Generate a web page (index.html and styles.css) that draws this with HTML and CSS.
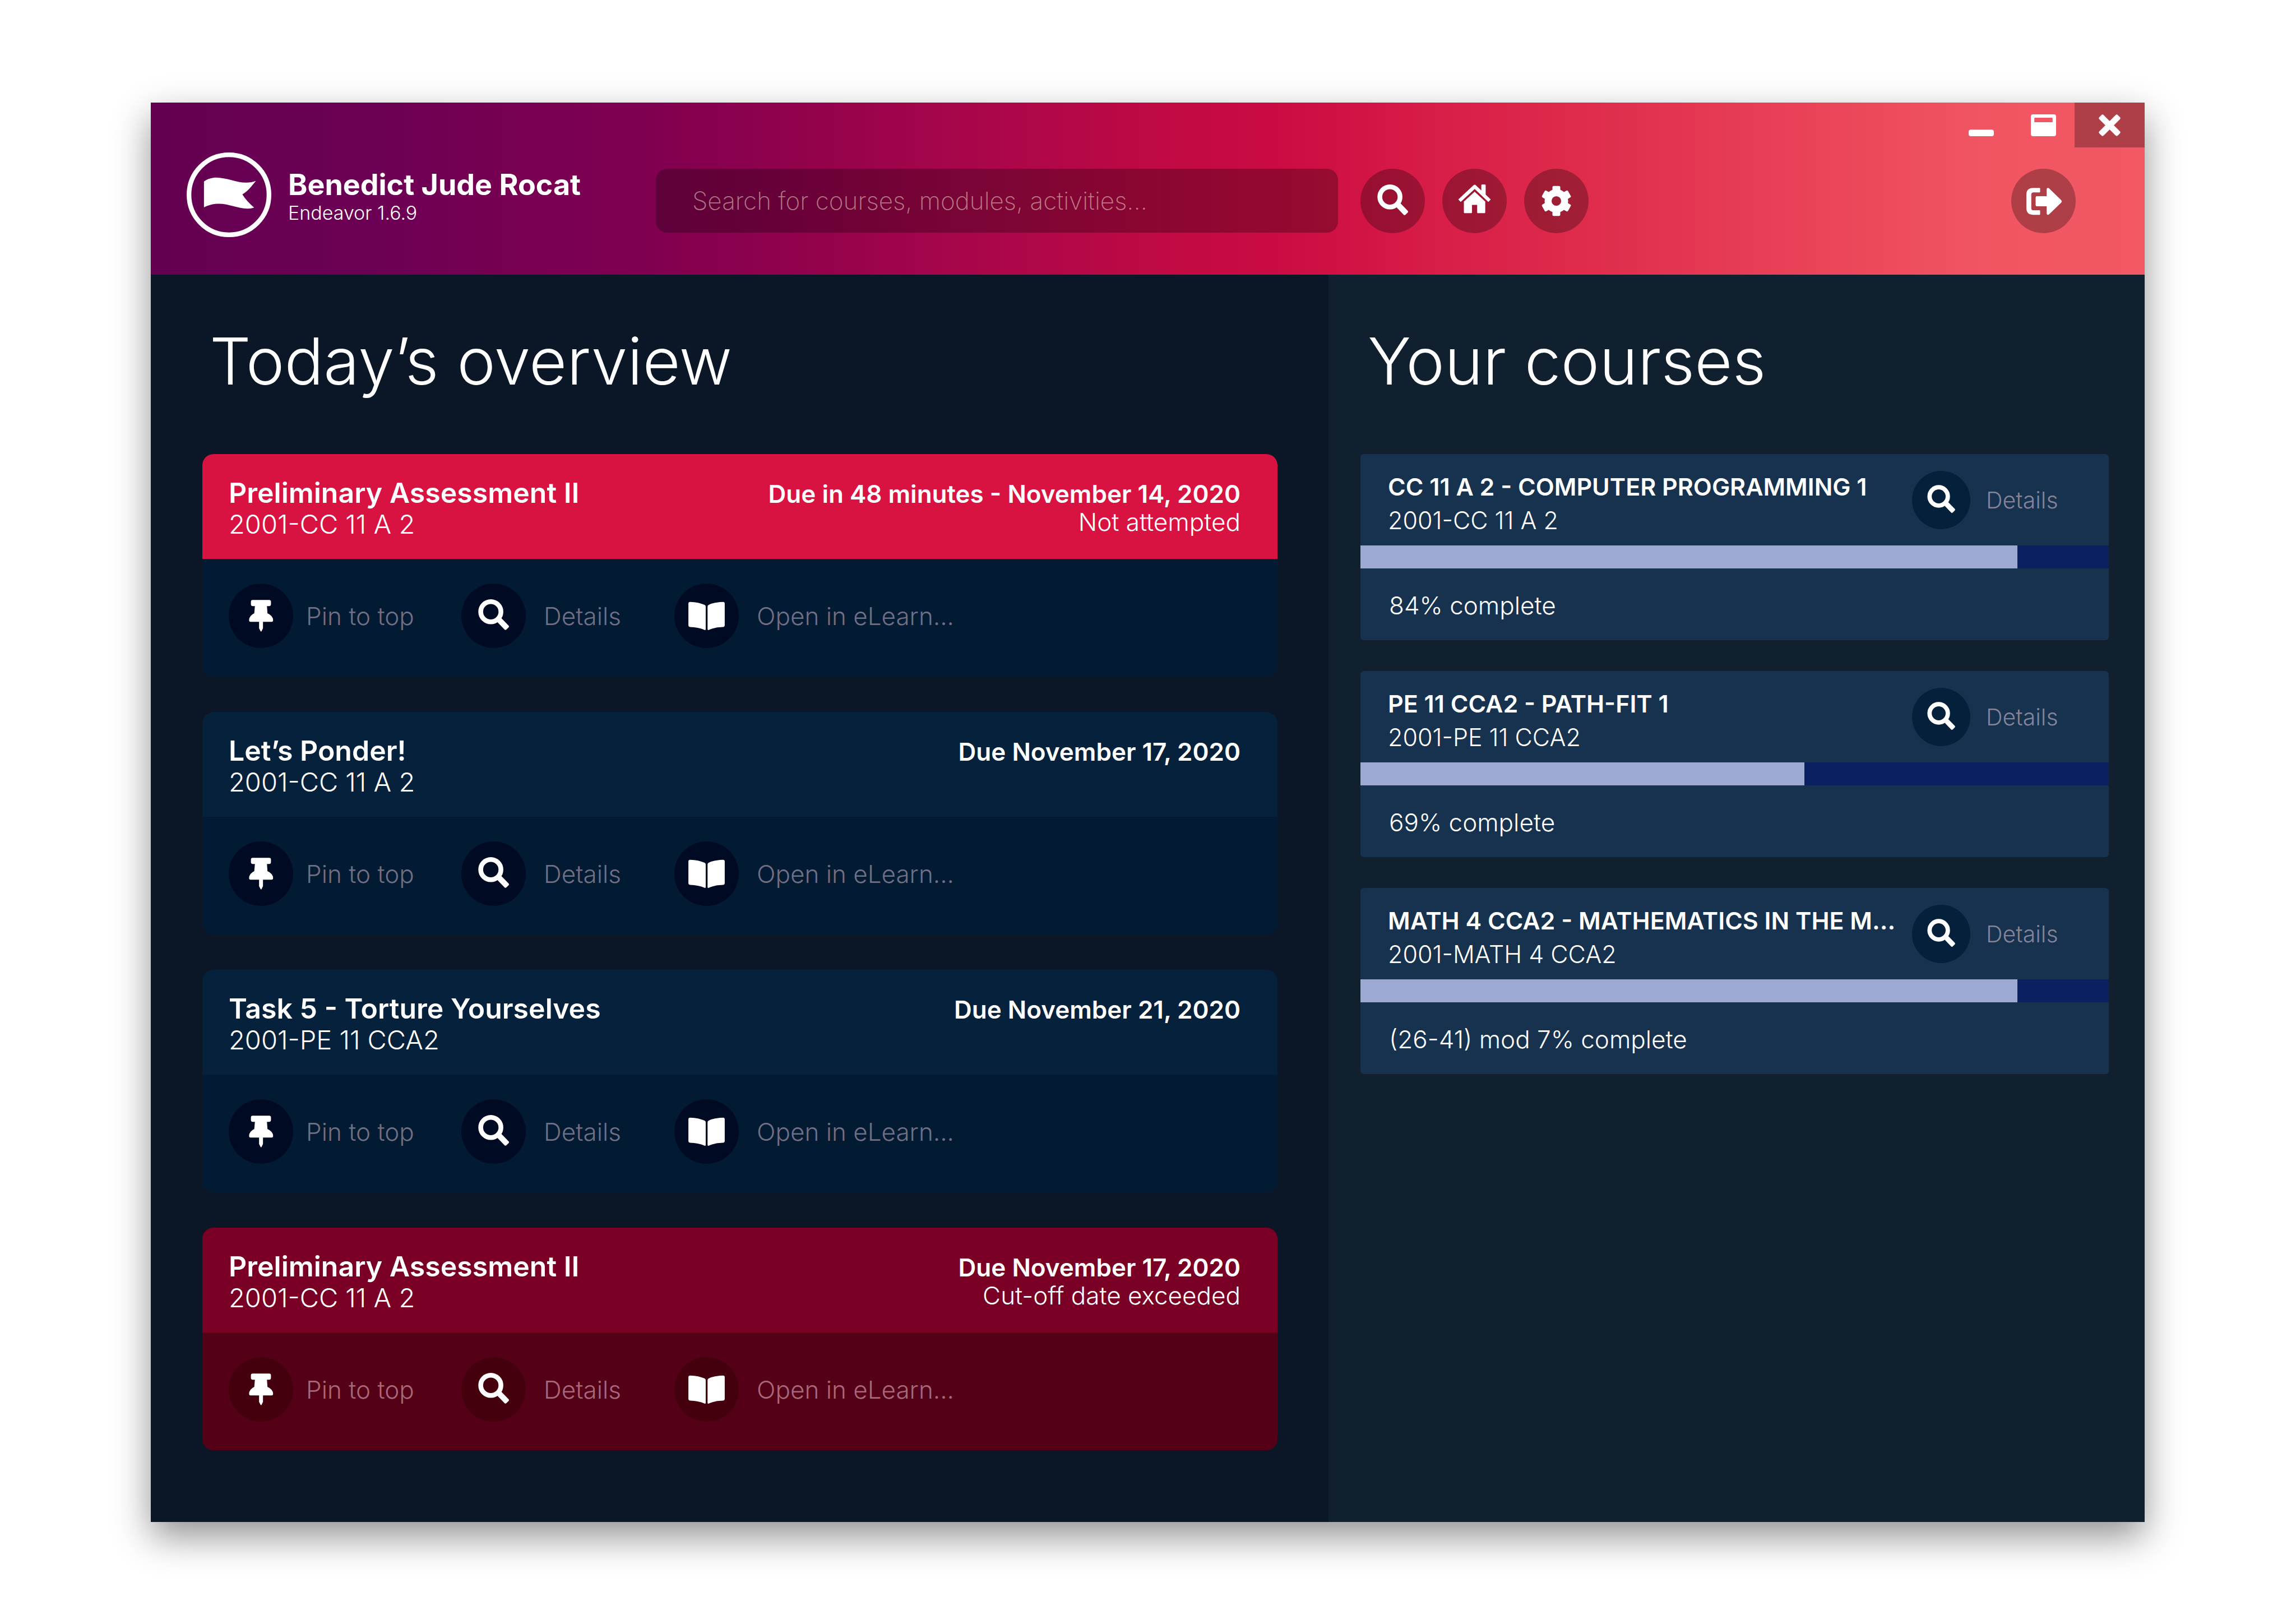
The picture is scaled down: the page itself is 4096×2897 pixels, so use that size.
FILE: index.html
```
<!DOCTYPE html>
<html lang="en">
<head>
<meta charset="utf-8">
<meta name="viewport" content="width=device-width, initial-scale=1">
<title>Endeavor</title>
<link rel="stylesheet" href="styles.css">
</head>
<body>
<svg class="sprite" aria-hidden="true">
  <symbol id="search" viewBox="0 0 148 148">
    <circle cx="67.7" cy="64.7" r="23.2" fill="none" stroke="currentColor" stroke-width="11"/>
    <rect x="0" y="-6.5" width="28" height="13" rx="3" fill="currentColor" transform="translate(86.5 83) rotate(46)"/>
  </symbol>
  <symbol id="home" viewBox="0 0 148 148">
    <path d="M39.5 73.3 74.3 41 108.5 73.3" fill="none" stroke="currentColor" stroke-width="8" stroke-linejoin="round"/>
    <path d="M89.6 54V38q0-2 2-2h6q2 0 2 2v24z" fill="currentColor"/>
    <path d="M74.3 52.7 98.6 75.3V100q0 2-2 2H82q-2 0-2-2V83H68.2v17q0 2-2 2H51.6q-2 0-2-2V75.3z" fill="currentColor"/>
  </symbol>
  <symbol id="gear" viewBox="0 0 148 148">
    <circle cx="74" cy="74" r="19" fill="none" stroke="currentColor" stroke-width="16"/>
    <g fill="currentColor">
      <rect x="65" y="39.5" width="18" height="16" rx="3"/>
      <rect x="65" y="39.5" width="18" height="16" rx="3" transform="rotate(60 74 74)"/>
      <rect x="65" y="39.5" width="18" height="16" rx="3" transform="rotate(120 74 74)"/>
      <rect x="65" y="39.5" width="18" height="16" rx="3" transform="rotate(180 74 74)"/>
      <rect x="65" y="39.5" width="18" height="16" rx="3" transform="rotate(240 74 74)"/>
      <rect x="65" y="39.5" width="18" height="16" rx="3" transform="rotate(300 74 74)"/>
    </g>
  </symbol>
  <symbol id="logout" viewBox="0 0 148 148">
    <path d="M66.3 45.5V52.8q0 1.500-1.500 1.500H51q-5 0-5 5v31q0 5 5 5h13.800q1.500 0 1.500 1.500v7.300q0 1.600-1.500 1.600H50q-15.200 0-15.200-15.200V59.200Q34.800 44 50 44h14.800q1.500 0 1.500 1.500z" fill="currentColor"/>
    <path d="M56 66q0-3 3-3H81.300V47q0-3 3-3 1.700 0 3 1.400L115 72.500q2.200 2.500 0 5L87.300 104.300q-1.300 1.400-3 1.400-3 0-3-3V86.300H59q-3 0-3-3z" fill="currentColor"/>
  </symbol>
  <symbol id="pin" viewBox="0 0 148 148">
    <g fill="currentColor">
      <rect x="51" y="37.700" width="46" height="14" rx="4"/>
      <path d="M60.300 50H87.700L89 68.300Q102 74 102 84.500 102 87.700 99 87.700H49.700Q46.700 87.700 46.700 84.500 46.700 74 58.700 68.300z"/>
      <path d="M69.700 86H78.700V102.700L75.600 109Q74.300 111.300 73 109L69.700 102.700z"/>
    </g>
  </symbol>
  <symbol id="book" viewBox="0 0 148 148">
    <path d="M32.300 46q0-4 4-4Q56 42.500 69.500 49 72 50.300 72 52.500V105q0 2.500-2.500 1.600Q55 100 36.300 99.700q-4 0-4-4z" fill="currentColor"/>
    <path d="M115.700 46q0-4-4-4Q92 42.500 78.800 49 76.300 50.300 76.300 52.500V105q0 2.500 2.500 1.600Q93 100 111.700 99.700q4 0 4-4z" fill="currentColor"/>
  </symbol>
</svg>

<div class="window">
  <header class="topbar">
    <div class="titlebar">
      <button class="win-btn" type="button" aria-label="Minimize">
        <svg class="win-icon" viewBox="0 0 58 50"><rect y="35" width="58" height="15" rx="5" fill="currentColor"/></svg>
      </button>
      <button class="win-btn" type="button" aria-label="Maximize">
        <svg class="win-icon" viewBox="0 0 58 50"><path fill="currentColor" fill-rule="evenodd" d="M5 0H53q5 0 5 5V45q0 5-5 5H5q-5 0-5-5V5Q0 0 5 0zM9.500 7.500Q8 7.500 8 9V18H50V9q0-1.500-1.500-1.500z"/></svg>
      </button>
      <button class="win-btn win-close" type="button" aria-label="Close">
        <svg class="win-icon" viewBox="0 0 58 50"><g fill="currentColor"><rect x="-1" y="18" width="60" height="14" rx="4" transform="rotate(45 29 25)"/><rect x="-1" y="18" width="60" height="14" rx="4" transform="rotate(-45 29 25)"/></g></svg>
      </button>
    </div>
    <div class="toolbar">
      <div class="brand">
        <svg class="logo" viewBox="0 0 582 582" aria-hidden="true">
          <circle cx="291" cy="291" r="275" fill="none" stroke="#fff" stroke-width="32"/>
          <path fill="#fff" d="M119 199C146 180 174 172 204 172 270 172 345 207 409 207 434 207 456 204 476 196 447 231 420 268 383 288 404 323 433 352 464 379 450 384 436 386 419 386 350 386 290 353 224 353 186 353 152 360 119 378z"/>
        </svg>
        <div class="brand-text">
          <strong class="user">Benedict Jude Rocat</strong>
          <span class="version">Endeavor 1.6.9</span>
        </div>
      </div>
      <form class="search" role="search">
        <input class="search-box" type="search" aria-label="Search" placeholder="Search for courses, modules, activities...">
        <button class="round" type="button" aria-label="Search"><svg class="icon"><use href="#search"/></svg></button>
        <button class="round" type="button" aria-label="Home"><svg class="icon"><use href="#home"/></svg></button>
        <button class="round" type="button" aria-label="Settings"><svg class="icon"><use href="#gear"/></svg></button>
      </form>
      <button class="round logout" type="button" aria-label="Log out"><svg class="icon"><use href="#logout"/></svg></button>
    </div>
  </header>

  <div class="columns">
    <main class="overview">
      <h1 class="heading">Today’s overview</h1>
      <div class="tasks">
        <article class="task task-urgent">
          <div class="task-head">
            <div><h2 class="task-title">Preliminary Assessment II</h2><p class="task-course">2001-CC 11 A 2</p></div>
            <div class="task-due"><p class="due">Due in 48 minutes - November 14, 2020</p><p class="status">Not attempted</p></div>
          </div>
          <div class="task-actions">
            <button class="action action-pin" type="button"><span class="disc"><svg class="icon"><use href="#pin"/></svg></span>Pin to top</button>
            <button class="action" type="button"><span class="disc"><svg class="icon"><use href="#search"/></svg></span>Details</button>
            <button class="action" type="button"><span class="disc"><svg class="icon"><use href="#book"/></svg></span>Open in eLearn...</button>
          </div>
        </article>
        <article class="task">
          <div class="task-head">
            <div><h2 class="task-title">Let’s Ponder!</h2><p class="task-course">2001-CC 11 A 2</p></div>
            <div class="task-due"><p class="due">Due November 17, 2020</p></div>
          </div>
          <div class="task-actions">
            <button class="action action-pin" type="button"><span class="disc"><svg class="icon"><use href="#pin"/></svg></span>Pin to top</button>
            <button class="action" type="button"><span class="disc"><svg class="icon"><use href="#search"/></svg></span>Details</button>
            <button class="action" type="button"><span class="disc"><svg class="icon"><use href="#book"/></svg></span>Open in eLearn...</button>
          </div>
        </article>
        <article class="task">
          <div class="task-head">
            <div><h2 class="task-title">Task 5 - Torture Yourselves</h2><p class="task-course">2001-PE 11 CCA2</p></div>
            <div class="task-due"><p class="due">Due November 21, 2020</p></div>
          </div>
          <div class="task-actions">
            <button class="action action-pin" type="button"><span class="disc"><svg class="icon"><use href="#pin"/></svg></span>Pin to top</button>
            <button class="action" type="button"><span class="disc"><svg class="icon"><use href="#search"/></svg></span>Details</button>
            <button class="action" type="button"><span class="disc"><svg class="icon"><use href="#book"/></svg></span>Open in eLearn...</button>
          </div>
        </article>
        <article class="task task-overdue">
          <div class="task-head">
            <div><h2 class="task-title">Preliminary Assessment II</h2><p class="task-course">2001-CC 11 A 2</p></div>
            <div class="task-due"><p class="due">Due November 17, 2020</p><p class="status">Cut-off date exceeded</p></div>
          </div>
          <div class="task-actions">
            <button class="action action-pin" type="button"><span class="disc"><svg class="icon"><use href="#pin"/></svg></span>Pin to top</button>
            <button class="action" type="button"><span class="disc"><svg class="icon"><use href="#search"/></svg></span>Details</button>
            <button class="action" type="button"><span class="disc"><svg class="icon"><use href="#book"/></svg></span>Open in eLearn...</button>
          </div>
        </article>
      </div>
    </main>

    <aside class="courses">
      <h1 class="heading">Your courses</h1>
      <div class="course-list">
        <article class="course">
          <div class="course-head">
            <div><h2 class="course-title">CC 11 A 2 - COMPUTER PROGRAMMING 1</h2><p class="course-code">2001-CC 11 A 2</p></div>
            <button class="action action-small" type="button"><span class="disc"><svg class="icon"><use href="#search"/></svg></span>Details</button>
          </div>
          <div class="bar" role="progressbar" aria-label="Course progress"><div class="bar-fill" style="width:87.8%"></div></div>
          <p class="course-foot">84% complete</p>
        </article>
        <article class="course">
          <div class="course-head">
            <div><h2 class="course-title">PE 11 CCA2 - PATH-FIT 1</h2><p class="course-code">2001-PE 11 CCA2</p></div>
            <button class="action action-small" type="button"><span class="disc"><svg class="icon"><use href="#search"/></svg></span>Details</button>
          </div>
          <div class="bar" role="progressbar" aria-label="Course progress"><div class="bar-fill" style="width:59.3%"></div></div>
          <p class="course-foot">69% complete</p>
        </article>
        <article class="course">
          <div class="course-head">
            <div><h2 class="course-title">MATH 4 CCA2 - MATHEMATICS IN THE M...</h2><p class="course-code">2001-MATH 4 CCA2</p></div>
            <button class="action action-small" type="button"><span class="disc"><svg class="icon"><use href="#search"/></svg></span>Details</button>
          </div>
          <div class="bar" role="progressbar" aria-label="Course progress"><div class="bar-fill" style="width:87.8%"></div></div>
          <p class="course-foot">(26-41) mod 7% complete</p>
        </article>
      </div>
    </aside>
  </div>
</div>
</body>
</html>
```
FILE: styles.css
```
* { box-sizing: border-box; }

body {
  margin: 0;
  min-height: 100vh;
  padding: 183px 270px 182px 269px;
  display: flex;
  background: #fff;
  color: #fff;
  font-family: Inter, "Liberation Sans", sans-serif;
  font-weight: 300;
  font-size: 44px;
  line-height: 60px;
}

h1, h2, p { margin: 0; font-weight: inherit; }
p, h2 { white-space: nowrap; }

button {
  margin: 0;
  padding: 0;
  border: 0;
  background: none;
  color: inherit;
  font: inherit;
  cursor: pointer;
}

.sprite { position: absolute; width: 0; height: 0; }

.window {
  flex: 1;
  min-width: 0;
  display: flex;
  flex-direction: column;
  box-shadow: 0 26px 62px rgba(0, 0, 0, .43);
}

/* Header */
.topbar {
  padding-bottom: 67px;
  background: linear-gradient(90deg,
    #640051 0%, #6c0054 11%, #780052 19%, #800050 25%, #95024c 34%,
    #a6064b 40%, #b60847 47%, #c10a43 51%, #ca0b43 56%, #d01244 60%,
    #d81c48 64%, #de2a4b 71%, #e23250 75%, #ee4d5d 88%, #f15562 92%, #f25864 100%);
}

.titlebar { display: flex; justify-content: flex-end; }

.win-btn {
  width: 111px;
  height: 80px;
  display: flex;
  align-items: center;
  justify-content: center;
}

.win-close { width: 125px; background: rgba(0, 0, 0, .28); }
.win-icon { width: 45px; height: 39px; display: block; }

.toolbar {
  display: flex;
  align-items: flex-start;
  padding: 9px 123px 0 64px;
}

.brand { width: 837px; display: flex; gap: 30px; }
.logo { width: 151px; height: 151px; flex: none; }
.brand-text { padding-top: 30px; display: flex; flex-direction: column; white-space: nowrap; }
.user { font-size: 52px; font-weight: 700; line-height: 56px; }
.version { font-size: 34px; line-height: 44px; }

.search { flex: 1; padding-top: 29px; display: flex; gap: 31px; }

.search-box {
  flex: 0 1 1217px;
  min-width: 0;
  height: 114px;
  margin: 0 9px 0 0;
  padding: 0 65px;
  border: 0;
  border-radius: 20px;
  background: rgba(0, 0, 0, .27);
  color: #fff;
  font: 200 44px/60px Inter, "Liberation Sans", sans-serif;
  appearance: none;
}
.search-box::placeholder { color: rgba(255, 235, 215, .5); opacity: 1; }

.round {
  width: 115px;
  height: 115px;
  flex: none;
  border-radius: 50%;
  background: rgba(0, 0, 0, .28);
}
.logout { margin-top: 29px; }
.icon { display: block; width: 100%; height: 100%; color: #fff; }

/* Columns */
.columns { flex: 1; display: grid; grid-template-columns: 2101fr 1456fr; }
.overview { padding: 84px 91px 128px 92px; background: #0b1727; min-width: 0; }
.courses { padding: 84px 64px 128px 57px; background: #11202e; min-width: 0; }

.heading {
  margin-bottom: 96px;
  padding-left: 13px;
  font-size: 116px;
  line-height: 140px;
}

/* Tasks */
.tasks { display: grid; gap: 63px; }
.task { border-radius: 20px; overflow: hidden; background: #031a33; }

.task-head {
  height: 187px;
  padding: 42px 66px 35px 47px;
  display: flex;
  justify-content: space-between;
  align-items: baseline;
  background: #06213b;
}
.task-title { font-size: 50px; font-weight: 600; line-height: 55px; }
.task-course { font-size: 47px; line-height: 55px; }
.task-due { text-align: right; }
.due { font-weight: 600; line-height: 50px; }
.status { line-height: 50px; }

.task-actions {
  padding: 44px 47px 51px;
  display: grid;
  grid-template-columns: 415px 380px auto;
  justify-content: start;
}

.action {
  display: flex;
  align-items: center;
  gap: 32px;
  color: #706f83;
  white-space: nowrap;
}
.action-pin { gap: 23px; }
.disc { width: 115px; height: 115px; flex: none; border-radius: 50%; background: #000a23; }

.task-urgent .task-head { background: #d91341; }
.task-overdue { background: #540017; }
.task-overdue .task-head { background: #790024; }
.task-overdue .disc { background: #45000e; }
.task-overdue .action { color: #a86879; }

/* Courses */
.course-list { display: grid; gap: 55px; }
.course { border-radius: 6px; overflow: hidden; background: #16324e; }

.course-head {
  height: 163px;
  padding: 28px 0 0 49px;
  display: grid;
  grid-template-columns: 1fr 351px;
  align-items: start;
}
.course-title { font-size: 43px; font-weight: 600; }
.course-code { font-size: 43px; }
.action-small { padding-top: 2px; gap: 28px; font-size: 41px; color: #858398; }
.action-small .disc { width: 104px; height: 104px; background: #05203a; }

.bar { height: 41px; background: #0a2060; }
.bar-fill { height: 100%; background: #9ca9d3; }
.course-foot { padding: 36px 51px 32px; }
```
